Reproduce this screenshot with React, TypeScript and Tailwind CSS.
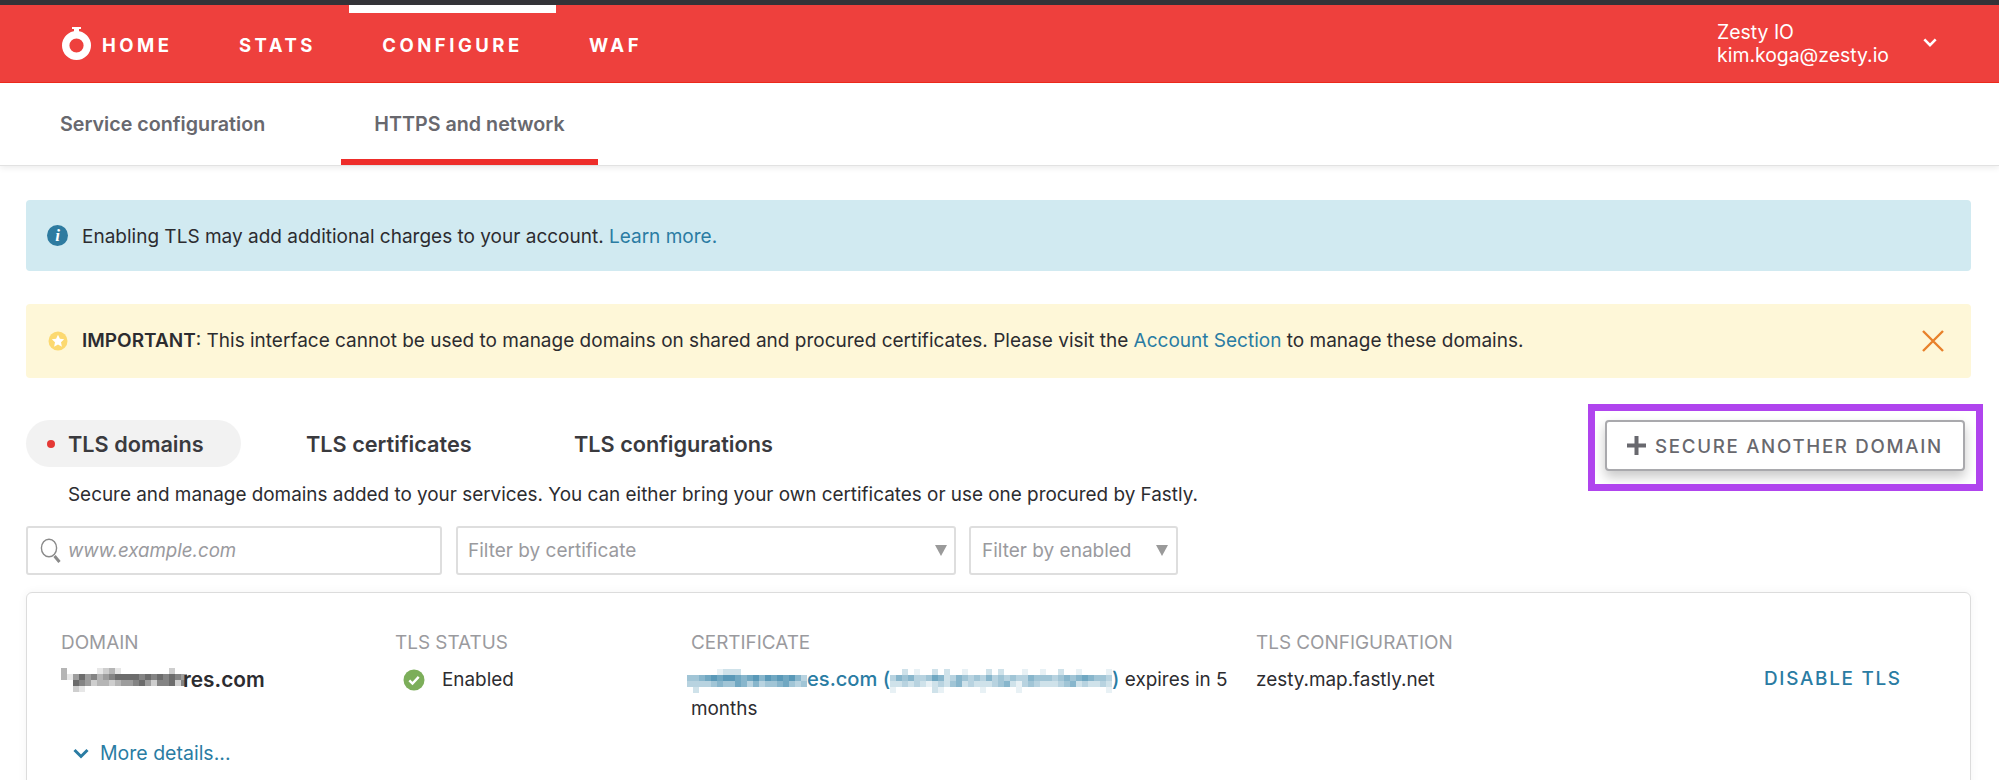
import React from 'react';

const font = { fontFamily: 'Inter, Roboto, "Liberation Sans", sans-serif' };

const Mosaic: React.FC<{ rows: string[]; color: string; className?: string }> = ({ rows, color, className }) => (
  <svg
    className={className}
    width={rows[0].length * 6}
    height={rows.length * 6}
    viewBox={`0 0 ${rows[0].length * 6} ${rows.length * 6}`}
    shapeRendering="crispEdges"
  >
    {rows.map((row, y) =>
      row.split('').map((cell, x) =>
        cell === '0' ? null : (
          <rect key={`${x}-${y}`} x={x * 6} y={y * 6} width={6} height={6} fill={color} fillOpacity={Number(cell) / 9} />
        )
      )
    )}
  </svg>
);

const Logo = () => (
  <svg width="29" height="33" viewBox="0 0 29 33" className="shrink-0">
    <path d="M10 0h9v2h-2v3h-5V2h-2z" fill="#fff" />
    <circle cx="14.5" cy="18.5" r="10.8" fill="none" stroke="#fff" strokeWidth="7.4" />
  </svg>
);

const InfoIcon = () => (
  <span className="w-[21px] h-[21px] rounded-full bg-[#2e7ba0] flex items-center justify-center text-white text-[17px] font-bold italic leading-none font-['Liberation_Serif',serif] shrink-0">
    i
  </span>
);

const StarIcon = () => (
  <svg width="20" height="20" viewBox="0 0 20 20" className="shrink-0">
    <circle cx="10" cy="10" r="9.5" fill="#fcd970" />
    <path d="M10 3.8l1.9 4 4.3.5-3.2 3 .9 4.4L10 13.5l-3.9 2.2.9-4.4-3.2-3 4.3-.5z" fill="#fff" />
  </svg>
);

const CheckIcon = () => (
  <svg width="22" height="22" viewBox="0 0 22 22" className="shrink-0">
    <circle cx="11" cy="11" r="10.5" fill="#7cae5a" />
    <path d="M6.3 11.3l3.2 3.2 6.2-6.6" fill="none" stroke="#fff" strokeWidth="2.4" />
  </svg>
);

const SearchIcon = () => (
  <svg width="22" height="26" viewBox="0 0 22 26" className="shrink-0">
    <ellipse cx="9" cy="10" rx="7.6" ry="8.8" fill="none" stroke="#8a8a8a" strokeWidth="1.4" />
    <path d="M14.5 18l5 6" stroke="#8a8a8a" strokeWidth="3" />
  </svg>
);

const Caret = () => (
  <svg width="12" height="11" viewBox="0 0 12 11" className="shrink-0">
    <path d="M0 0h12L6 11z" fill="#9a9a9a" />
  </svg>
);

const Chevron = ({ className, color }: { className?: string; color: string }) => (
  <svg width="16" height="11" viewBox="0 0 16 11" className={className}>
    <path d="M1.5 2l6.5 6.5L14.5 2" fill="none" stroke={color} strokeWidth="3" />
  </svg>
);

const navItem = 'text-white text-[18.5px] font-bold tracking-[3.5px] leading-none mt-[4px]';

export default function App() {
  return (
    <div style={font} className="w-[1999px] h-[780px] overflow-hidden bg-white text-[#2c2c30] flex flex-col">
      <div className="h-[5px] bg-[#333338] shrink-0" />
      <header className="h-[78px] shrink-0 bg-[#ee403d] border-b border-[#f02a1c] flex items-stretch pl-[62px] pr-[62px]">
        <div className="flex items-center w-[177px]">
          <Logo />
          <span className={`${navItem} ml-[11px]`}>HOME</span>
        </div>
        <div className="flex items-center w-[110px]">
          <span className={navItem}>STATS</span>
        </div>
        <div className="flex items-center justify-center w-[207px] shadow-[inset_0_8px_0_#fff]">
          <span className={navItem}>CONFIGURE</span>
        </div>
        <div className="flex items-center ml-[33px]">
          <span className={navItem}>WAF</span>
        </div>
        <div className="ml-auto flex items-center">
          <div className="text-white text-[19.4px] leading-[23px] font-normal">
            <div>Zesty IO</div>
            <div>kim.koga@zesty.io</div>
          </div>
          <Chevron color="#fff" className="ml-[34px] mb-[2px] w-[14px]" />
        </div>
      </header>

      <nav className="h-[83px] shrink-0 bg-white flex items-stretch pl-[60px] border-b border-[#e2e2e2] shadow-[0_2px_6px_rgba(0,0,0,0.08)] relative">
        <div className="flex items-center w-[281px] text-[19.7px] font-semibold text-[#68686e] pt-[2px]">Service configuration</div>
        <div className="flex items-center justify-center w-[257px] text-[19.7px] font-semibold text-[#68686e] pt-[2px] shadow-[inset_0_-6px_0_#ee2d2a]">
          HTTPS and network
        </div>
      </nav>

      <main className="pl-[26px] pr-[28px] flex flex-col">
        <div className="mt-[34px] h-[71px] rounded-[4px] bg-[#d1eaf1] flex items-center pl-[21px] text-[19px]">
          <InfoIcon />
          <span className="ml-[14px] mt-[4px]">
            Enabling TLS may add additional charges to your account. <a className="text-[#2a7ca3]">Learn more.</a>
          </span>
        </div>

        <div className="mt-[33px] h-[74px] rounded-[4px] bg-[#fef7d8] flex items-center pl-[22px] pr-[27px] text-[19px]">
          <StarIcon />
          <span className="ml-[14px] mt-[1px]">
            <span className="font-semibold">IMPORTANT</span>: This interface cannot be used to manage domains on shared and procured certificates. Please visit the{' '}
            <a className="text-[#2a7ca3]">Account Section</a> to manage these domains.
          </span>
          <svg width="22" height="22" viewBox="0 0 22 22" className="ml-auto">
            <path d="M1 1l20 20M21 1L1 21" stroke="#e8812b" strokeWidth="2.4" fill="none" />
          </svg>
        </div>

        <div className="mt-[42px] flex items-start justify-between">
          <div className="flex items-center h-[47px] text-[21.7px] font-semibold text-[#3a3a3e]">
            <div className="h-[47px] w-[215px] rounded-full bg-[#f2f2f2] flex items-center pl-[21px]">
              <span className="w-[8px] h-[8px] rounded-full bg-[#e53935]" />
              <span className="ml-[13px] mt-[1px]">TLS domains</span>
            </div>
            <span className="ml-[65px] w-[268px] mt-[1px]">TLS certificates</span>
            <span className="mt-[1px]">TLS configurations</span>
          </div>
          <div className="relative mr-[6px]">
            <button className="w-[360px] h-[51px] bg-white border-2 border-[#a9a9ad] rounded-[4px] shadow-[0_6px_12px_rgba(0,0,0,0.22)] flex items-center pl-[20px] text-[18.7px] font-medium tracking-[1.7px] text-[#68686e]">
              <svg width="19" height="19" viewBox="0 0 19 19" className="shrink-0 mr-[9px]">
                <path d="M9.5 0v19M0 9.5h19" stroke="#68686e" strokeWidth="4" />
              </svg>
              <span className="mt-[4px]">SECURE ANOTHER DOMAIN</span>
            </button>
            <div className="absolute -left-[17px] -right-[18px] -top-[16px] -bottom-[20px] border-[7px] border-[#b044ee] pointer-events-none" />
          </div>
        </div>

        <p className="mt-[12px] pl-[42px] text-[18.9px] leading-[24px]">
          Secure and manage domains added to your services. You can either bring your own certificates or use one procured by Fastly.
        </p>

        <div className="mt-[19px] flex gap-[14px] text-[19px] text-[#9a9a9e]">
          <div className="w-[416px] h-[49px] border-2 border-[#dedede] rounded-[3px] flex items-center pl-[12px]">
            <SearchIcon />
            <span className="ml-[6px] mt-[2px] italic text-[18.7px]">www.example.com</span>
          </div>
          <div className="w-[500px] h-[49px] border-2 border-[#dedede] rounded-[3px] flex items-center justify-between pl-[10px] pr-[7px]">
            <span className="mt-[2px]">Filter by certificate</span>
            <Caret />
          </div>
          <div className="w-[209px] h-[49px] border-2 border-[#dedede] rounded-[3px] flex items-center justify-between pl-[11px] pr-[8px] -ml-[1px]">
            <span className="mt-[2px]">Filter by enabled</span>
            <Caret />
          </div>
        </div>

        <section className="mt-[17px] h-[300px] border border-[#dcdcdc] rounded-t-[6px] shadow-[0_0_10px_rgba(0,0,0,0.05)] pl-[34px] pt-[38px]">
          <div className="grid grid-cols-[334px_296px_565px_508px_auto] items-start text-[18.9px] leading-[24px]">
            <div className="text-[#9a9a9e]">DOMAIN</div>
            <div className="text-[#9a9a9e]">TLS STATUS</div>
            <div className="text-[#9a9a9e]">CERTIFICATE</div>
            <div className="text-[#9a9a9e]">TLS CONFIGURATION</div>
            <div />
            <div className="mt-[13px] h-[24px] flex items-center font-semibold">
              <Mosaic
                color="#222"
                className="shrink-0"
                rows={[
                  '300000123100000000200',
                  '314645345666656565654',
                  '006542332344564255625',
                  '002100000000000000000',
                ]}
              />
              <span className="-ml-[4px] text-[20.8px]">res.com</span>
            </div>
            <div className="mt-[13px] h-[24px] flex items-center pl-[8px]">
              <CheckIcon />
              <span className="ml-[17px]">Enabled</span>
            </div>
            <div className="mt-[10px] w-[540px] leading-[29px]">
              <div>
                <span className="text-[#2a7ca3] font-medium text-[20.1px]">
                  <Mosaic
                    color="#2a7ca3"
                    className="inline-block align-middle -ml-[4px] -my-[12px]"
                    rows={[
                      '00000122200000000000',
                      '44567677656757676753',
                      '33334544653534456434',
                      '02000000000000000000',
                    ]}
                  />
                  es.com (
                  <Mosaic
                    color="#2a7ca3"
                    className="inline-block align-middle -my-[12px]"
                    rows={[
                      '0020100202001000202000100100200100001',
                      '3545334652354343534343354443454565443',
                      '2232321232452322234521343222345232232',
                      '1000000210000001000001000000000000001',
                    ]}
                  />
                  )
                </span>{' '}
                expires in 5
              </div>
              <div>months</div>
            </div>
            <div className="mt-[13px]">zesty.map.fastly.net</div>
            <div className="mt-[12px] text-[#2a7ca3] font-medium tracking-[1.7px]">DISABLE TLS</div>
          </div>
          <div className="mt-[16px] ml-[12px] flex items-center text-[19.5px] text-[#2a7ca3]">
            <Chevron color="#2a7ca3" />
            <span className="ml-[11px]">More details...</span>
          </div>
        </section>
      </main>
    </div>
  );
}
